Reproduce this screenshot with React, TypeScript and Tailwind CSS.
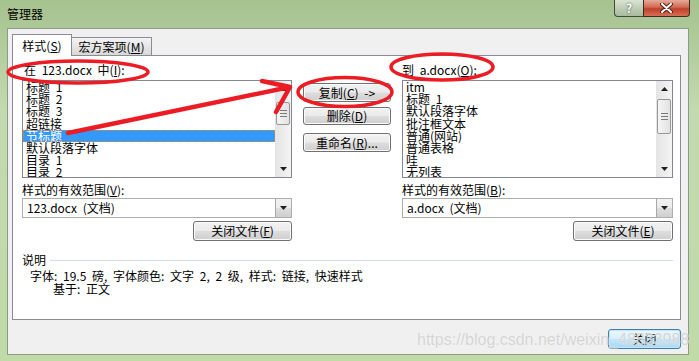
import React from 'react';

const btnBg =
  'bg-[linear-gradient(180deg,#f2f2f2_0%,#ebebeb_48%,#dddddd_52%,#cfcfcf_100%)]';

function Btn({ children, className = '' }: { children: React.ReactNode; className?: string }) {
  return (
    <div
      className={`flex items-center justify-center rounded-[3px] border border-[#707070] text-[12px] leading-none shadow-[inset_0_0_0_1px_#fbfbfb] ${btnBg} ${className}`}
    >
      {children}
    </div>
  );
}

function Arrow({ up }: { up?: boolean }) {
  return (
    <div className="flex h-[16px] items-center justify-center">
      <svg width="7" height="4" viewBox="0 0 7 4">
        <path d={up ? 'M3.5 0L7 4H0Z' : 'M0 0H7L3.5 4Z'} fill="#1f1f1f" />
      </svg>
    </div>
  );
}

function ScrollBar({ thumb }: { thumb: string }) {
  return (
    <div className="flex w-[16px] flex-col bg-[linear-gradient(90deg,#e4e4e4,#f4f4f4)]">
      <Arrow up />
      <div className="flex-1">
        <div
          className={`mx-[1px] flex flex-col items-center justify-center gap-[2px] rounded-[2px] border border-[#979797] bg-[linear-gradient(90deg,#f5f5f5,#e2e2e2)] ${thumb}`}
        >
          <div className="h-px w-[7px] bg-[#7a7a7a]" />
          <div className="h-px w-[7px] bg-[#7a7a7a]" />
          <div className="h-px w-[7px] bg-[#7a7a7a]" />
        </div>
      </div>
      <Arrow />
    </div>
  );
}

function ListBox({ items, selected, thumb }: { items: string[]; selected?: number; thumb: string }) {
  return (
    <div className="flex h-[98px] border border-[#828790] bg-white">
      <div className="flex-1 overflow-hidden">
        {items.map((t, i) => (
          <div
            key={t}
            className={`h-[12.2px] whitespace-nowrap pl-[3px] text-[12px] leading-[12.2px] ${
              i === selected
                ? 'bg-[#3399ff] text-white outline-1 -outline-offset-1 outline-dotted outline-[#d0883a]'
                : ''
            }`}
          >
            {t}
          </div>
        ))}
      </div>
      <ScrollBar thumb={thumb} />
    </div>
  );
}

function Combo({ text }: { text: string }) {
  return (
    <div className="flex h-[20px] items-center border border-[#abadb3] bg-white">
      <div className="flex-1 pl-[4px] text-[12px] leading-none">{text}</div>
      <div
        className={`flex h-full w-[16px] items-center justify-center border-l border-[#a8a8a8] ${btnBg}`}
      >
        <svg width="7" height="4" viewBox="0 0 7 4">
          <path d="M0 0H7L3.5 4Z" fill="#1f1f1f" />
        </svg>
      </div>
    </div>
  );
}

export default function App() {
  return (
    <div className="relative h-[361px] w-[699px] overflow-hidden bg-[linear-gradient(180deg,#a6c28f_0%,#c3d9af_30%,#c0daa8_100%)] font-['Noto_Sans_CJK_SC','Noto_Sans',sans-serif] text-black [word-spacing:3px]">
      {/* Title bar */}
      <div className="flex h-[28px] items-start">
        <div className="pl-[7px] pt-[6px] text-[12px] leading-[16px]">管理器</div>
        <div className="ml-auto mr-[9px] flex">
          <div className="flex h-[17px] w-[29px] items-center justify-center rounded-bl-[4px] border border-t-0 border-r-0 border-[#3f4d3e] bg-[linear-gradient(180deg,#dbe4d4_0%,#bfcdb6_50%,#a9bb9f_100%)] text-[12px] font-bold leading-none text-white [text-shadow:0_0_2px_#2e3a2e]">
            ?
          </div>
          <div className="flex h-[17px] w-[47px] items-center justify-center rounded-br-[4px] border border-t-0 border-[#3f2a24] bg-[linear-gradient(180deg,#e6ab9a_0%,#d06a52_45%,#c0402a_55%,#d66e55_100%)]">
            <svg width="13" height="10" viewBox="0 0 13 10">
              <path d="M2 1L11 9M11 1L2 9" stroke="#4a2018" strokeWidth="4" strokeLinecap="round" />
              <path d="M2 1L11 9M11 1L2 9" stroke="#fff" strokeWidth="2" strokeLinecap="round" />
            </svg>
          </div>
        </div>
      </div>

      {/* Dialog body */}
      <div className="ml-[7px] flex h-[327px] w-[682px] flex-col border border-[#8c9a88] bg-[#f0f0f0] pl-[4px] pr-[7px] pt-[5px]">
        {/* Tabs */}
        <div className="flex h-[21px] items-end text-[12px] leading-none">
          <div className="relative z-10 -mb-px flex h-[22px] w-[60px] items-center justify-center border border-b-0 border-[#898c95] bg-white">
            样式(<u>S</u>)
          </div>
          <div className="flex h-[18px] w-[80px] items-center justify-center border border-b-0 border-l-0 border-[#898c95] bg-[linear-gradient(180deg,#f3f3f3_0%,#e6e6e6_50%,#d8d8d8_100%)]">
            宏方案项(<u>M</u>)
          </div>
        </div>

        {/* Tab panel */}
        <div className="flex h-[265px] flex-col border border-[#898c95] bg-white pl-[9px] pr-[7px] pt-[6px]">
          <div className="flex">
            {/* Left */}
            <div className="flex w-[270px] flex-col">
              <div className="h-[16px] pl-[2px] text-[12px] leading-[16px]">
                在 123.docx 中(<u>I</u>):
              </div>
              <div className="mt-[2px]">
                <ListBox
                  items={['标题 1', '标题 2', '标题 3', '超链接', '节标题', '默认段落字体', '目录 1', '目录 2']}
                  selected={4}
                  thumb="mt-[5px] h-[23px]"
                />
              </div>
              <div className="mt-[4px] h-[16px] text-[12px] leading-[16px]">
                样式的有效范围(<u>V</u>):
              </div>
              <Combo text="123.docx (文档)" />
              <div className="mt-[3px] flex justify-end">
                <Btn className="h-[20px] w-[99px]">
                  关闭文件(<u>F</u>)
                </Btn>
              </div>
            </div>

            {/* Middle buttons */}
            <div className="ml-[11px] flex w-[88px] flex-col">
              <Btn className="mt-[21px] h-[19px]">
                复制(<u>C</u>) -&gt;
              </Btn>
              <Btn className="mt-[5px] h-[18px]">
                删除(<u>D</u>)
              </Btn>
              <Btn className="mt-[8px] h-[19px]">
                重命名(<u>R</u>)...
              </Btn>
            </div>

            {/* Right */}
            <div className="ml-[11px] flex w-[271px] flex-col">
              <div className="h-[16px] text-[12px] leading-[16px]">
                到 a.docx(<u>O</u>):
              </div>
              <div className="mt-[2px]">
                <ListBox
                  items={['itm', '标题 1', '默认段落字体', '批注框文本', '普通(网站)', '普通表格', '哇', '无列表']}
                  thumb="mt-[2px] h-[35px]"
                />
              </div>
              <div className="mt-[4px] h-[16px] text-[12px] leading-[16px]">
                样式的有效范围(<u>B</u>):
              </div>
              <Combo text="a.docx (文档)" />
              <div className="mt-[3px] flex justify-end">
                <Btn className="h-[20px] w-[100px]">
                  关闭文件(<u>E</u>)
                </Btn>
              </div>
            </div>
          </div>

          {/* Description */}
          <div className="mt-[11px] flex h-[16px] items-center text-[12px] leading-none">
            <span>说明</span>
            <div className="ml-[4px] h-px flex-1 bg-[#d5dfe5]" />
          </div>
          <div className="mt-[1px] text-[12px] leading-[13px]">
            <div className="pl-[8px]">字体: 19.5 磅, 字体颜色: 文字 2, 2 级, 样式: 链接, 快速样式</div>
            <div className="pl-[31px]">基于: 正文</div>
          </div>
        </div>

        {/* Bottom row */}
        <div className="mt-[9px] flex justify-end">
          <div className="flex h-[20px] w-[73px] items-center justify-center rounded-[3px] border border-[#3c7fb1] bg-[linear-gradient(180deg,#eaf6fd_0%,#d9f0fc_48%,#bee6fd_52%,#a7d9f5_100%)] text-[12px] leading-none shadow-[inset_0_0_0_1px_#c4e5f6]">
            关闭
          </div>
        </div>
      </div>

      {/* Watermark */}
      <div className="absolute left-[417px] top-[331px] z-10 whitespace-nowrap font-['Liberation_Sans',sans-serif] text-[16px] leading-[18px] text-[#c9c9c9]/80 [word-spacing:0px] [text-shadow:0_0_1px_#ffffff]">
        https://blog.csdn.net/weixin_48833988
      </div>

      {/* Red annotations */}
      <svg className="pointer-events-none absolute left-0 top-0 z-20" width="699" height="361">
        <g fill="none" stroke="#ec1c24" strokeWidth="3.5" strokeLinecap="round" strokeLinejoin="round">
          <ellipse cx="78" cy="72" rx="70" ry="11" />
          <ellipse cx="345" cy="92" rx="47" ry="14.5" />
          <ellipse cx="442" cy="67" rx="51" ry="13" />
          <path d="M68 133L290 87M262 81L290 87L276 112" strokeWidth="4.5" />
        </g>
      </svg>
    </div>
  );
}
